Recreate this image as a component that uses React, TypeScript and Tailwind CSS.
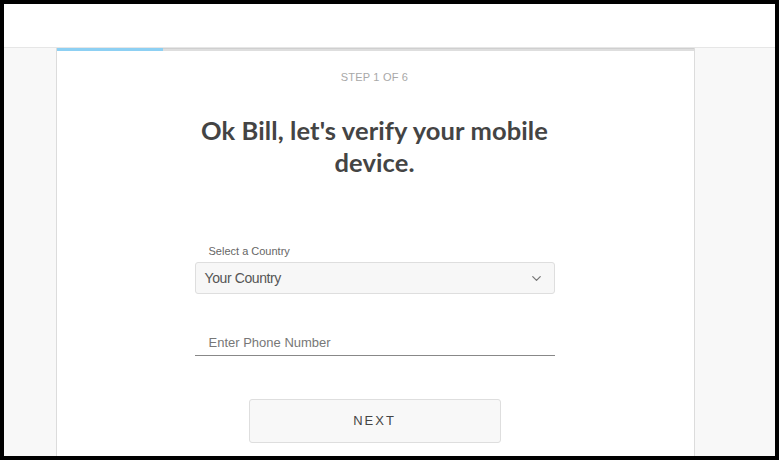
import { ChevronDown } from 'lucide-react'

export default function App() {
  return (
    <div className="w-[779px] h-[460px] bg-black p-[4px] overflow-hidden" style={{ fontFamily: '"Liberation Sans", Arial, sans-serif' }}>
      <div className="flex flex-col h-full bg-[#f8f8f8]">
        {/* top bar */}
        <div className="h-[44px] bg-white border-b border-[#e6e6e6] shrink-0" />

        <div className="flex flex-1 min-h-0">
          <div className="w-[52px] shrink-0" />

          {/* card */}
          <div className="w-[639px] shrink-0 bg-white border-x border-[#dcdcdc] flex flex-col items-center pr-[2px]">
            <div className="w-[calc(100%+2px)] h-[3px] bg-[#dedede] border-t border-[#cfcfcf] flex self-start">
              <div className="w-[106px] h-[3px] -mt-px bg-[#8dd0f3]" />
            </div>

            <p className="mt-[18px] text-[11px] leading-4 tracking-[0.2px] text-[#a8a8a8]">STEP 1 OF 6</p>

            <h1
              className="mt-[29px] w-[380px] text-center text-[25.5px] leading-[32px] font-bold tracking-[0.1px] text-[#444]"
              style={{ fontFamily: 'Lato, "Open Sans", sans-serif' }}
            >
              Ok Bill, let's verify your mobile device.
            </h1>

            <div className="mt-[65px] w-[360px]">
              <label className="block pl-[14px] text-[11px] leading-4 text-[#666]">Select a Country</label>
              <div className="mt-[3px] h-[32px] flex items-center justify-between pl-[9px] pr-[10px] bg-[#f7f7f7] border border-[#dedede] rounded-[3px]">
                <span className="text-[14px] tracking-[-0.4px] text-[#555]">Your Country</span>
                <ChevronDown className="w-[15px] h-[15px] text-[#777]" strokeWidth={2} />
              </div>

              <div className="mt-[36px] border-b border-[#888] pl-[14px] pb-[1px]">
                <span className="text-[13px] leading-5 text-[#777]">Enter Phone Number</span>
              </div>
            </div>

            <button className="mt-[43px] w-[252px] h-[44px] bg-[#f8f8f8] border border-[#dedede] rounded-[3px] text-[13px] tracking-[2px] text-[#444]">
              NEXT
            </button>
          </div>

          <div className="flex-1" />
        </div>
      </div>
    </div>
  )
}
